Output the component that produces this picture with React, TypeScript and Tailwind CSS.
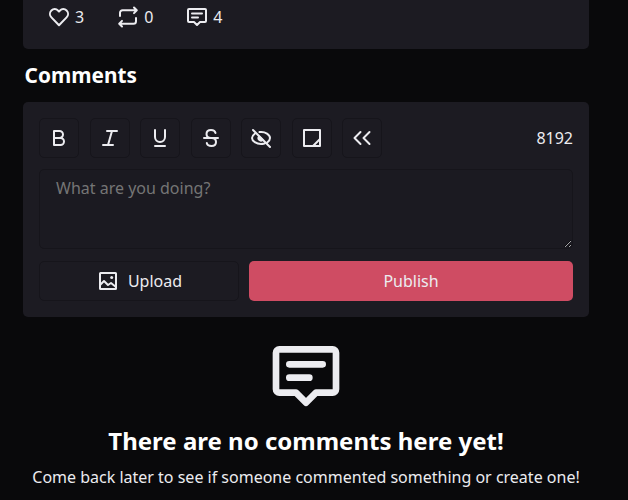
import type { ReactNode } from "react";

function Icon({ children, className = "size-6" }: { children: ReactNode; className?: string }) {
  return (
    <svg viewBox="0 0 24 24" fill="none" stroke="currentColor" strokeWidth="2" strokeLinecap="round" strokeLinejoin="round" className={`${className} shrink-0`}>
      {children}
    </svg>
  );
}

const comment = (
  <>
    <path d="M3 5v11a1 1 0 0 0 1 1h5l3 3 3-3h5a1 1 0 0 0 1-1V5a1 1 0 0 0-1-1H4a1 1 0 0 0-1 1z" />
    <path d="M7 8.500h10M7 12.500h6" />
  </>
);

const stats = [
  { count: 3, icon: <path d="M12 20.200 4.400 12.400C2.500 10.500 2.500 7.400 4.400 5.500s4.800-1.900 6.600 0l1 1 1-1c1.800-1.900 4.700-1.900 6.600 0s1.900 5 0 6.900z" /> },
  { count: 0, icon: <path d="m18 2.500 2.800 2.800L18 8.100M20 5.300H6.500a2.500 2.500 0 0 0-2.500 2.500V11M6 21.500l-2.800-2.800L6 15.900M4 18.700h13.500a2.500 2.500 0 0 0 2.500-2.500V13" /> },
  { count: 4, icon: comment },
];

const tools = [
  { name: "Bold", icon: <path d="M7 12V5h5.500a3.500 3.500 0 0 1 0 7M7 12h6.500a3.500 3.500 0 0 1 0 7H7z" /> },
  { name: "Italic", icon: <path d="M9 5h10M14 5l-4 14M5 19h10" /> },
  { name: "Underline", icon: <path d="M7 4v7a5 5 0 0 0 10 0V4M7 20h10" /> },
  { name: "Strikethrough", icon: <path d="M16.500 7c-.4-2-2-3-4.500-3-2.700 0-4.500 1.500-4.500 4S9.300 12 12 12h.5c2.500 0 4.500 1.500 4.500 4s-2 4-4.500 4c-2.500 0-4.300-1-4.700-3M5 12h14" /> },
  {
    name: "Spoiler",
    icon: (
      <>
        <path d="m4 4 17 17M10.500 6.100C16.500 5.200 21 9 21 12c0 1.300-.9 3-2.500 4.200M6 7.500C4 9 3 10.800 3 12c0 3 4.500 6 9 6 1.200 0 2.400-.2 3.500-.5" />
        <path d="M10 10.500a2.500 2.500 0 0 0 3.500 3.500z" fill="currentColor" />
      </>
    ),
  },
  { name: "Note", icon: <path d="M20 4v16H4V4zM20 13l-7 7" /> },
  { name: "Quote", icon: <path d="m10.500 6-6 6 6 6M19.500 6l-6 6 6 6" /> },
];

export default function App() {
  return (
    <main className="h-[500px] overflow-hidden bg-[#09090b] pl-[23px] font-['Noto_Sans',sans-serif] text-base text-[#ececf0]">
      <div className="w-[566px]">
        <section className="flex h-[49px] gap-8 rounded-b-[5px] bg-[#1c1b22] pt-[5px] pl-6">
          {stats.map((s) => (
            <div key={s.count} className="flex h-6 items-center gap-1">
              <Icon>{s.icon}</Icon>
              <span>{s.count}</span>
            </div>
          ))}
        </section>
        <h2 className="mt-3 ml-[1.600px] h-[41px] text-[20.8px] leading-7 font-bold text-white">Comments</h2>
        <section className="h-[215px] rounded-[5px] bg-[#1c1b22] p-4">
          <div className="flex h-10 items-center gap-[10.500px]">
            {tools.map((t) => (
              <button key={t.name} aria-label={t.name} className="size-10 rounded-[5px] border border-[#16151b] p-[7px]">
                <Icon>{t.icon}</Icon>
              </button>
            ))}
            <span className="ml-auto">8192</span>
          </div>
          <textarea placeholder="What are you doing?" className="mt-[11px] block h-20 w-full resize rounded-[5px] border border-[#16151b] bg-[#1b1a21] px-4 py-[6px] leading-6 placeholder:text-[#757575]" />
          <div className="mt-3 flex gap-[10px]">
            <button className="flex h-10 w-[200px] items-center justify-center gap-2 rounded-[5px] border border-[#16151b]">
              <Icon>
                <rect x="4" y="4" width="16" height="16" rx=".5" />
                <path d="m4 16 4-4 4 4 3-2 5 4" />
                <circle cx="15.700" cy="8.500" r="1.500" fill="currentColor" stroke="none" />
              </Icon>
              Upload
            </button>
            <button className="h-10 flex-1 rounded-[5px] bg-[#cf4c63]">Publish</button>
          </div>
        </section>
        <section className="flex flex-col items-center pt-[19px]">
          <Icon className="size-20">{comment}</Icon>
          <h1 className="mt-[9px] text-2xl leading-8 font-bold text-white">There are no comments here yet!</h1>
          <p className="mt-2 leading-6 whitespace-nowrap">Come back later to see if someone commented something or create one!</p>
        </section>
      </div>
    </main>
  );
}
